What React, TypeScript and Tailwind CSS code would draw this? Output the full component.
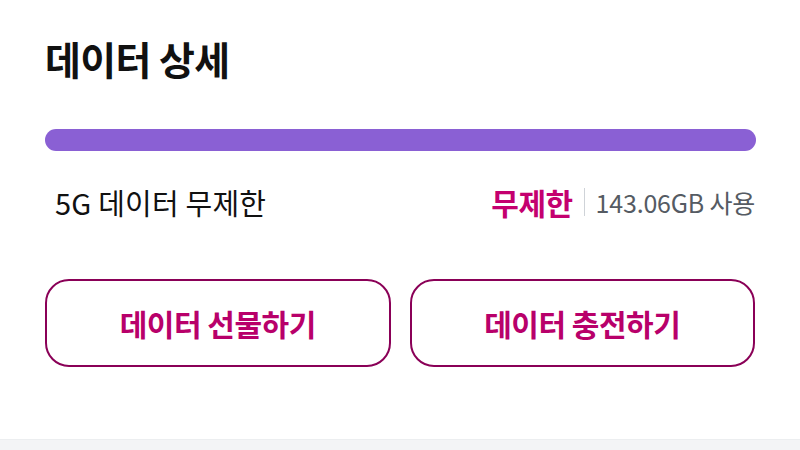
import React from "react";

const font = { fontFamily: '"Noto Sans CJK KR", "Noto Sans", sans-serif' };

export default function App() {
  return (
    <div className="w-[800px] h-[450px] bg-white flex flex-col overflow-hidden" style={font}>
      <div className="flex-1 px-[45px] pt-[34px]">
        <h1 className="text-[39px] leading-[48px] font-bold text-[#111] tracking-[-0.6px]">데이터 상세</h1>
        <div className="mt-[47px] h-[22px] rounded-full bg-[#8a60d4] w-[711px]" />
        <div className="mt-[33px] h-[36px] flex items-center justify-between pl-[10px]">
          <span className="text-[29px] leading-[36px] text-[#111] tracking-[0.2px]">5G 데이터 무제한</span>
          <div className="flex items-center">
            <span className="text-[30px] leading-[36px] font-bold text-[#c4006f] tracking-[-0.5px]">무제한</span>
            <span className="mx-[11px] w-px h-[28px] bg-[#cfd3d8]" />
            <span className="text-[25px] leading-[36px] text-[#555b63] tracking-[-0.2px]">143.06GB 사용</span>
          </div>
        </div>
        <div className="mt-[59px] grid grid-cols-2 gap-[19px] w-[710px]">
          <button className="h-[88px] rounded-[24px] border-2 border-[#8a0057] flex items-center justify-center">
            <span className="text-[30px] font-bold text-[#b8006a] tracking-[-0.5px]">데이터 선물하기</span>
          </button>
          <button className="h-[88px] rounded-[24px] border-2 border-[#8a0057] flex items-center justify-center">
            <span className="text-[30px] font-bold text-[#b8006a] tracking-[-0.5px]">데이터 충전하기</span>
          </button>
        </div>
      </div>
      <div className="h-[11px] bg-[#f3f4f6] border-t border-[#eceef0]" />
    </div>
  );
}
